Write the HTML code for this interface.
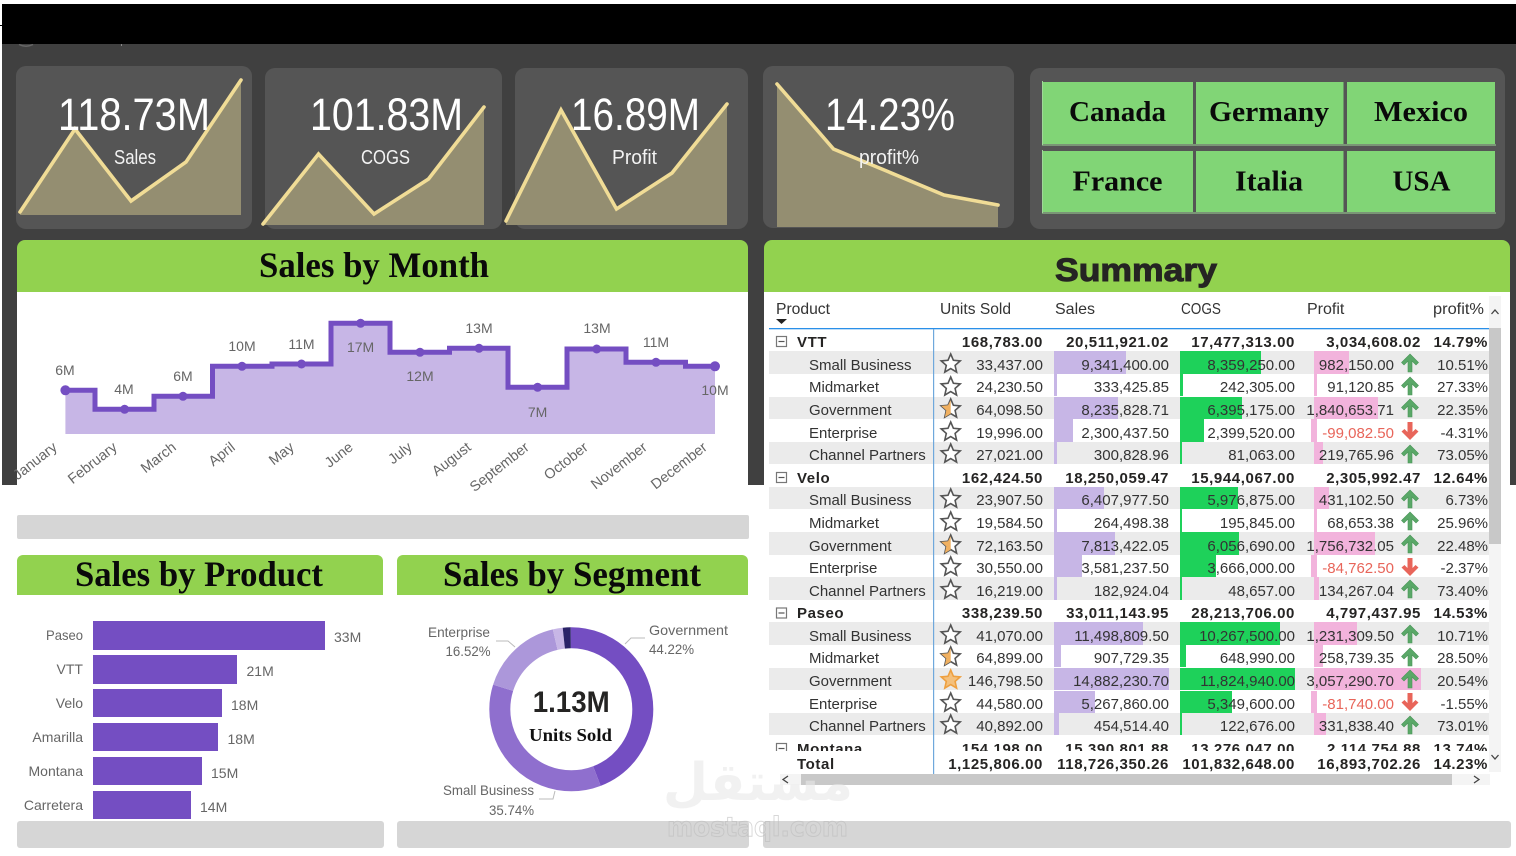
<!DOCTYPE html>
<html lang="en"><head><meta charset="utf-8"><title>Sales Dashboard</title>
<style>
html,body{margin:0;padding:0;background:#fff;width:1516px;height:856px;overflow:hidden}
svg{display:block;font-family:"Liberation Sans",sans-serif}
.kpi{fill:#fff;font-size:45px}
.kl{fill:#f2f2f2;font-size:20px}
.btn{fill:#0a0a0a;font-family:"Liberation Serif",serif;font-weight:bold;font-size:29px}
.ttl{fill:#0a0a0a;font-family:"Liberation Serif",serif;font-weight:bold;font-size:36px}
.lb{fill:#666;font-size:14px}
.mo{fill:#666;font-size:14.4px}
.t{fill:#333;font-size:15px}
.b{fill:#252423;font-size:15px;font-weight:bold;letter-spacing:.6px}
.e{text-anchor:end}
.h{fill:#333;font-size:16px}
.neg{fill:#e8655a}
</style></head><body>
<svg xmlns="http://www.w3.org/2000/svg" width="1516" height="856" viewBox="0 0 1516 856">
<defs>
<path id="st" d="M0 -10L2.7 -3.7L9.5 -3.1L4.4 1.4L5.9 8.1L0 4.6L-5.9 8.1L-4.4 1.4L-9.5 -3.1L-2.7 -3.7Z"/>
<g id="s0"><use href="#st" fill="#fff" stroke="#555" stroke-width="1.6"/></g>
<g id="s1"><use href="#st" fill="#fff" stroke="#555" stroke-width="1.6"/><path d="M0 -9L0 4.6L-5.9 8.1L-4.4 1.4L-9.5 -3.1L-2.7 -3.7Z" fill="#f0b060"/></g>
<g id="s2"><use href="#st" fill="#f4c07c" stroke="#eea040" stroke-width="1.6"/></g>
<path id="up" d="M0 -9L8.5 -.5L6 2L2 -2V9H-2V-2L-6 2L-8.5 -.5Z" fill="#5aa868" stroke="#4a9558" stroke-width=".6"/>
<path id="dn" d="M0 9L8.5 .5L5.5 -2L2.5 1V-9H-2.5V1L-5.5 -2L-8.5 .5Z" fill="#e8655a"/>
<g id="mb"><rect x="-5" y="-5" width="10" height="10" fill="#fff" stroke="#777" stroke-width="1.2"/><path d="M-3 0H3" stroke="#555" stroke-width="1.2"/></g>
</defs>

<!-- page backgrounds -->
<rect width="1516" height="856" fill="#fff"/>
<rect x="2" y="44" width="1514" height="441" fill="#404040"/>
<rect x="2" y="4" width="1514" height="40" fill="#000"/>
<rect x="0" y="25" width="2" height="1" fill="#000"/>
<path d="M19 44.500Q26 48 33 44.500" fill="none" stroke="#666" stroke-width="1.500"/>
<rect x="121" y="44" width="1" height="2" fill="#888"/>

<!-- KPI cards -->
<rect x="16" y="66" width="236" height="163" rx="10" fill="#555"/>
<rect x="265" y="68" width="237" height="161" rx="10" fill="#555"/>
<rect x="515" y="68" width="233" height="161" rx="10" fill="#555"/>
<rect x="763" y="66" width="251" height="162" rx="10" fill="#555"/>
<rect x="1030" y="68" width="475" height="161" rx="10" fill="#555"/>

<path d="M20 212L75 129L131 201L186 162L241 80V215H20Z" fill="#948e71"/>
<path d="M20 212L75 129L131 201L186 162L241 80" fill="none" stroke="#f0dc96" stroke-width="3.600" stroke-linecap="round"/>
<path d="M263 224L318.500 154L374 214L428.500 179L484 107V225H263Z" fill="#948e71"/>
<path d="M263 224L318.500 154L374 214L428.500 179L484 107" fill="none" stroke="#f0dc96" stroke-width="3.600" stroke-linecap="round"/>
<path d="M506 221L561 110L616.500 209L672 173L727 104V225H506Z" fill="#948e71"/>
<path d="M506 221L561 110L616.500 209L672 173L727 104" fill="none" stroke="#f0dc96" stroke-width="3.600" stroke-linecap="round"/>
<path d="M777 84L833.500 149L889 172L944 195L998 205V227H777Z" fill="#948e71"/>
<path d="M777 84L833.500 149L889 172L944 195L998 205" fill="none" stroke="#f0dc96" stroke-width="3.600" stroke-linecap="round"/>

<text class="kpi" x="58" y="130" textLength="152" lengthAdjust="spacingAndGlyphs">118.73M</text>
<text class="kpi" x="310" y="130" textLength="153" lengthAdjust="spacingAndGlyphs">101.83M</text>
<text class="kpi" x="571" y="130" textLength="129" lengthAdjust="spacingAndGlyphs">16.89M</text>
<text class="kpi" x="825" y="130" textLength="130" lengthAdjust="spacingAndGlyphs">14.23%</text>
<text class="kl" x="114" y="164" textLength="42" lengthAdjust="spacingAndGlyphs">Sales</text>
<text class="kl" x="361" y="164" textLength="49" lengthAdjust="spacingAndGlyphs">COGS</text>
<text class="kl" x="612" y="164" textLength="45" lengthAdjust="spacingAndGlyphs">Profit</text>
<text class="kl" x="859" y="164" textLength="60" lengthAdjust="spacingAndGlyphs">profit%</text>

<!-- Country buttons -->
<g fill="#81d576">
<rect x="1043" y="82" width="150" height="62"/><rect x="1196" y="82" width="147.500" height="62"/><rect x="1347" y="82" width="148" height="62"/>
<rect x="1043" y="151" width="150" height="61"/><rect x="1196" y="151" width="147.500" height="61"/><rect x="1347" y="151" width="148" height="61"/>
</g>
<path d="M1042 145H1496M1042 213H1496M1042.500 81V145M1042.500 150V213" stroke="#9fd898" stroke-width="1" fill="none"/>
<text class="btn" x="1069" y="121" textLength="97" lengthAdjust="spacingAndGlyphs">Canada</text>
<text class="btn" x="1209" y="121" textLength="120" lengthAdjust="spacingAndGlyphs">Germany</text>
<text class="btn" x="1374" y="121" textLength="94" lengthAdjust="spacingAndGlyphs">Mexico</text>
<text class="btn" x="1072.500" y="190.500" textLength="90" lengthAdjust="spacingAndGlyphs">France</text>
<text class="btn" x="1235" y="190.500" textLength="68" lengthAdjust="spacingAndGlyphs">Italia</text>
<text class="btn" x="1392.500" y="190.500" textLength="58" lengthAdjust="spacingAndGlyphs">USA</text>

<!-- Sales by Month -->
<rect x="17" y="292" width="731" height="224" fill="#fff"/>
<path d="M17 292V248a8 8 0 0 1 8-8H740a8 8 0 0 1 8 8V292Z" fill="#92d24f"/>
<text class="ttl" x="259" y="277" textLength="230" lengthAdjust="spacingAndGlyphs">Sales by Month</text>
<rect x="17" y="515" width="732" height="24" rx="2" fill="#d6d6d6"/>
<path d="M65.400 390.300H95V409.300H154V396.300H212.500V366.300H272V364H331V323.300H390V352.300H449.500V348.300H508V387.300H567V349H626V362.300H685.500V366.300H715V434H65.400Z" fill="#c7b6e6"/>
<path d="M65.400 390.300H95V409.300H154V396.300H212.500V366.300H272V364H331V323.300H390V352.300H449.500V348.300H508V387.300H567V349H626V362.300H685.500V366.300H715" fill="none" stroke="#744ec2" stroke-width="5"/>
<g fill="#744ec2">
<circle cx="65.400" cy="390.300" r="5"/><circle cx="124.600" cy="409.300" r="4.500"/><circle cx="183" cy="396.300" r="4.500"/><circle cx="242" cy="366.300" r="4.500"/><circle cx="301.500" cy="364" r="4.500"/><circle cx="360.600" cy="323.300" r="4.500"/><circle cx="420" cy="352.300" r="4.500"/><circle cx="479" cy="348.300" r="4.500"/><circle cx="537.600" cy="387.300" r="4.500"/><circle cx="596.700" cy="349" r="4.500"/><circle cx="656" cy="362.300" r="4.500"/><circle cx="715" cy="366.300" r="5"/>
</g>
<g class="lb" text-anchor="middle">
<text x="65" y="375">6M</text><text x="124" y="394">4M</text><text x="183" y="381">6M</text><text x="242" y="351">10M</text><text x="301.500" y="349">11M</text><text x="360.600" y="352">17M</text><text x="420" y="381">12M</text><text x="479" y="333">13M</text><text x="537.600" y="417">7M</text><text x="597" y="333">13M</text><text x="656" y="347">11M</text><text x="715" y="395">10M</text>
</g>
<g class="mo" text-anchor="end">
<text x="58" y="449" transform="rotate(-38 58 449)">January</text>
<text x="118" y="449" transform="rotate(-38 118 449)">February</text>
<text x="177" y="449" transform="rotate(-38 177 449)">March</text>
<text x="236" y="449" transform="rotate(-38 236 449)">April</text>
<text x="295" y="449" transform="rotate(-38 295 449)">May</text>
<text x="354" y="449" transform="rotate(-38 354 449)">June</text>
<text x="413" y="449" transform="rotate(-38 413 449)">July</text>
<text x="472" y="449" transform="rotate(-38 472 449)">August</text>
<text x="530" y="449" transform="rotate(-38 530 449)">September</text>
<text x="589" y="449" transform="rotate(-38 589 449)">October</text>
<text x="648" y="449" transform="rotate(-38 648 449)">November</text>
<text x="708" y="449" transform="rotate(-38 708 449)">December</text>
</g>

<!-- Sales by Product -->
<path d="M17 595V561a6 6 0 0 1 6-6H377a6 6 0 0 1 6 6V595Z" fill="#92d24f"/>
<text class="ttl" x="75" y="586" textLength="248" lengthAdjust="spacingAndGlyphs">Sales by Product</text>
<g fill="#744ec2">
<rect x="93" y="621" width="232" height="29"/><rect x="93" y="655" width="144" height="29"/><rect x="93" y="689" width="129" height="28"/><rect x="93" y="723" width="125" height="28"/><rect x="93" y="757" width="109" height="28"/><rect x="93" y="791" width="98" height="28"/>
</g>
<g class="lb" text-anchor="end">
<text x="83" y="640" textLength="37" lengthAdjust="spacingAndGlyphs">Paseo</text><text x="83" y="674">VTT</text><text x="83" y="708">Velo</text><text x="83" y="742">Amarilla</text><text x="83" y="776">Montana</text><text x="83" y="810">Carretera</text>
</g>
<g class="lb">
<text x="334" y="642">33M</text><text x="246.500" y="676">21M</text><text x="231" y="710">18M</text><text x="227.500" y="744">18M</text><text x="211" y="778">15M</text><text x="200" y="812">14M</text>
</g>
<rect x="17" y="821" width="367" height="27" rx="3" fill="#d6d6d6"/>

<!-- Sales by Segment -->
<path d="M397 595V561a6 6 0 0 1 6-6H742a6 6 0 0 1 6 6V595Z" fill="#92d24f"/>
<text class="ttl" x="443" y="586" textLength="258" lengthAdjust="spacingAndGlyphs">Sales by Segment</text>
<g fill="none" stroke-width="21" transform="rotate(-90 571.300 709.300)">
<circle cx="571.300" cy="709.300" r="71.500" pathLength="360" stroke="#744ec2" stroke-dasharray="159.200 200.800"/>
<circle cx="571.300" cy="709.300" r="71.500" pathLength="360" stroke="#8f6fce" stroke-dasharray="128.700 231.300" stroke-dashoffset="-159.200"/>
<circle cx="571.300" cy="709.300" r="71.500" pathLength="360" stroke="#ac97da" stroke-dasharray="59.500 300.500" stroke-dashoffset="-287.900"/>
<circle cx="571.300" cy="709.300" r="71.500" pathLength="360" stroke="#c7b6e6" stroke-dasharray="7 353" stroke-dashoffset="-347.400"/>
<circle cx="571.300" cy="709.300" r="71.500" pathLength="360" stroke="#2a2368" stroke-dasharray="5.600 354.400" stroke-dashoffset="-354.400"/>
</g>
<text x="532.700" y="712" font-size="30" font-weight="bold" fill="#252423" textLength="77" lengthAdjust="spacingAndGlyphs">1.13M</text>
<text x="529" y="741" font-size="18" font-weight="bold" fill="#111" style="font-family:'Liberation Serif',serif" textLength="83" lengthAdjust="spacingAndGlyphs">Units Sold</text>
<path d="M625 644L631 638H645M515 647L508 641H496M555 791L553 799H539" fill="none" stroke="#bbb" stroke-width="1"/>
<g class="lb">
<text x="649" y="635" textLength="79" lengthAdjust="spacingAndGlyphs">Government</text><text x="649" y="654" textLength="45" lengthAdjust="spacingAndGlyphs">44.22%</text>
</g>
<g class="lb">
<text x="428" y="637" textLength="62" lengthAdjust="spacingAndGlyphs">Enterprise</text><text x="445.500" y="656" textLength="45" lengthAdjust="spacingAndGlyphs">16.52%</text>
<text x="443" y="795" textLength="91" lengthAdjust="spacingAndGlyphs">Small Business</text><text x="489" y="815" textLength="45" lengthAdjust="spacingAndGlyphs">35.74%</text>
</g>
<rect x="397" y="821" width="352" height="27" rx="3" fill="#d6d6d6"/>
<rect x="763" y="821" width="748" height="27" rx="3" fill="#d6d6d6"/>

<!-- Summary card -->
<rect x="764" y="292" width="746" height="193" fill="#fff"/>
<path d="M764 292V248a8 8 0 0 1 8-8H1502a8 8 0 0 1 8 8V292Z" fill="#92d24f"/>
<text x="1055" y="281" font-size="32" font-weight="bold" fill="#252423" stroke="#252423" stroke-width="1" textLength="162" lengthAdjust="spacingAndGlyphs">Summary</text>

<!-- stripes -->
<g fill="#ebebeb">
<rect x="769" y="351" width="720" height="23"/><rect x="769" y="397" width="720" height="22"/><rect x="769" y="442" width="720" height="22"/>
<rect x="769" y="487" width="720" height="22"/><rect x="769" y="532" width="720" height="23"/><rect x="769" y="577" width="720" height="23"/>
<rect x="769" y="622" width="720" height="23"/><rect x="769" y="668" width="720" height="22"/><rect x="769" y="713" width="720" height="22"/>
</g>
<!-- Sales bars -->
<g fill="#c7b6e6">
<rect x="1054" y="351" width="72" height="23"/><rect x="1054" y="374" width="3" height="22"/><rect x="1054" y="397" width="64" height="22"/><rect x="1054" y="419" width="19" height="23"/><rect x="1054" y="442" width="3" height="22"/>
<rect x="1054" y="487" width="50" height="22"/><rect x="1054" y="509" width="3" height="23"/><rect x="1054" y="532" width="61" height="23"/><rect x="1054" y="555" width="28" height="22"/><rect x="1054" y="577" width="3" height="23"/>
<rect x="1054" y="622" width="89" height="23"/><rect x="1054" y="645" width="7" height="22"/><rect x="1054" y="668" width="115" height="22"/><rect x="1054" y="691" width="41" height="22"/><rect x="1054" y="713" width="5" height="22"/>
</g>
<!-- COGS bars -->
<g fill="#1ed15a">
<rect x="1180" y="351" width="81" height="23"/><rect x="1180" y="374" width="3" height="22"/><rect x="1180" y="397" width="62" height="22"/><rect x="1180" y="419" width="24" height="23"/><rect x="1180" y="442" width="2" height="22"/>
<rect x="1180" y="487" width="58" height="22"/><rect x="1180" y="509" width="2" height="23"/><rect x="1180" y="532" width="59" height="23"/><rect x="1180" y="555" width="36" height="22"/><rect x="1180" y="577" width="2" height="23"/>
<rect x="1180" y="622" width="100" height="23"/><rect x="1180" y="645" width="6" height="22"/><rect x="1180" y="668" width="115" height="22"/><rect x="1180" y="691" width="52" height="22"/><rect x="1180" y="713" width="2" height="22"/>
</g>
<!-- Profit bars -->
<g fill="#f2b3dc">
<rect x="1314" y="351" width="35" height="23"/><rect x="1314" y="374" width="3" height="22"/><rect x="1314" y="397" width="64" height="22"/><rect x="1311" y="419" width="6" height="23"/><rect x="1314" y="442" width="9" height="22"/>
<rect x="1314" y="487" width="15" height="22"/><rect x="1314" y="509" width="3" height="23"/><rect x="1314" y="532" width="61" height="23"/><rect x="1311" y="555" width="6" height="22"/><rect x="1314" y="577" width="5" height="23"/>
<rect x="1314" y="622" width="43" height="23"/><rect x="1314" y="645" width="9" height="22"/><rect x="1314" y="668" width="107" height="22"/><rect x="1311" y="691" width="6" height="22"/><rect x="1314" y="713" width="12" height="22"/>
</g>

<!-- Header -->
<g class="h">
<text x="776" y="314" textLength="54" lengthAdjust="spacingAndGlyphs">Product</text><text x="940" y="314" textLength="71" lengthAdjust="spacingAndGlyphs">Units Sold</text><text x="1055" y="314">Sales</text><text x="1181" y="314" textLength="40" lengthAdjust="spacingAndGlyphs">COGS</text><text x="1307" y="314">Profit</text><text x="1433" y="314" textLength="51" lengthAdjust="spacingAndGlyphs">profit%</text>
</g>
<path d="M776 319H787L781.500 324Z" fill="#222"/>
<rect x="769" y="328" width="721" height="1.300" fill="#2a8fe8"/>

<!-- Rows -->
<use href="#mb" x="781.500" y="341.500"/><use href="#mb" x="781.500" y="477.500"/><use href="#mb" x="781.500" y="613"/><use href="#mb" x="781.500" y="748.500"/>
<g class="b">
<text x="797" y="347">VTT</text><text x="797" y="483">Velo</text><text x="797" y="618">Paseo</text><text x="797" y="754">Montana</text>
</g>
<g class="t">
<text x="809" y="370">Small Business</text><text x="809" y="392">Midmarket</text><text x="809" y="415">Government</text><text x="809" y="438">Enterprise</text><text x="809" y="460">Channel Partners</text>
<text x="809" y="505">Small Business</text><text x="809" y="528">Midmarket</text><text x="809" y="551">Government</text><text x="809" y="573">Enterprise</text><text x="809" y="596">Channel Partners</text>
<text x="809" y="641">Small Business</text><text x="809" y="663">Midmarket</text><text x="809" y="686">Government</text><text x="809" y="709">Enterprise</text><text x="809" y="731">Channel Partners</text>
</g>
<g class="b e">
<text x="1043" y="347">168,783.00</text><text x="1169" y="347">20,511,921.02</text><text x="1295" y="347">17,477,313.00</text><text x="1421" y="347">3,034,608.02</text><text x="1488" y="347">14.79%</text>
<text x="1043" y="483">162,424.50</text><text x="1169" y="483">18,250,059.47</text><text x="1295" y="483">15,944,067.00</text><text x="1421" y="483">2,305,992.47</text><text x="1488" y="483">12.64%</text>
<text x="1043" y="618">338,239.50</text><text x="1169" y="618">33,011,143.95</text><text x="1295" y="618">28,213,706.00</text><text x="1421" y="618">4,797,437.95</text><text x="1488" y="618">14.53%</text>
<text x="1043" y="754">154,198.00</text><text x="1169" y="754">15,390,801.88</text><text x="1295" y="754">13,276,047.00</text><text x="1421" y="754">2,114,754.88</text><text x="1488" y="754">13.74%</text>
</g>
<g class="t e">
<text x="1043" y="370">33,437.00</text><text x="1169" y="370">9,341,400.00</text><text x="1295" y="370">8,359,250.00</text><text x="1394" y="370">982,150.00</text><text x="1488" y="370">10.51%</text>
<text x="1043" y="392">24,230.50</text><text x="1169" y="392">333,425.85</text><text x="1295" y="392">242,305.00</text><text x="1394" y="392">91,120.85</text><text x="1488" y="392">27.33%</text>
<text x="1043" y="415">64,098.50</text><text x="1169" y="415">8,235,828.71</text><text x="1295" y="415">6,395,175.00</text><text x="1394" y="415">1,840,653.71</text><text x="1488" y="415">22.35%</text>
<text x="1043" y="438">19,996.00</text><text x="1169" y="438">2,300,437.50</text><text x="1295" y="438">2,399,520.00</text><text class="neg" x="1394" y="438">-99,082.50</text><text x="1488" y="438">-4.31%</text>
<text x="1043" y="460">27,021.00</text><text x="1169" y="460">300,828.96</text><text x="1295" y="460">81,063.00</text><text x="1394" y="460">219,765.96</text><text x="1488" y="460">73.05%</text>

<text x="1043" y="505">23,907.50</text><text x="1169" y="505">6,407,977.50</text><text x="1295" y="505">5,976,875.00</text><text x="1394" y="505">431,102.50</text><text x="1488" y="505">6.73%</text>
<text x="1043" y="528">19,584.50</text><text x="1169" y="528">264,498.38</text><text x="1295" y="528">195,845.00</text><text x="1394" y="528">68,653.38</text><text x="1488" y="528">25.96%</text>
<text x="1043" y="551">72,163.50</text><text x="1169" y="551">7,813,422.05</text><text x="1295" y="551">6,056,690.00</text><text x="1394" y="551">1,756,732.05</text><text x="1488" y="551">22.48%</text>
<text x="1043" y="573">30,550.00</text><text x="1169" y="573">3,581,237.50</text><text x="1295" y="573">3,666,000.00</text><text class="neg" x="1394" y="573">-84,762.50</text><text x="1488" y="573">-2.37%</text>
<text x="1043" y="596">16,219.00</text><text x="1169" y="596">182,924.04</text><text x="1295" y="596">48,657.00</text><text x="1394" y="596">134,267.04</text><text x="1488" y="596">73.40%</text>

<text x="1043" y="641">41,070.00</text><text x="1169" y="641">11,498,809.50</text><text x="1295" y="641">10,267,500.00</text><text x="1394" y="641">1,231,309.50</text><text x="1488" y="641">10.71%</text>
<text x="1043" y="663">64,899.00</text><text x="1169" y="663">907,729.35</text><text x="1295" y="663">648,990.00</text><text x="1394" y="663">258,739.35</text><text x="1488" y="663">28.50%</text>
<text x="1043" y="686">146,798.50</text><text x="1169" y="686">14,882,230.70</text><text x="1295" y="686">11,824,940.00</text><text x="1394" y="686">3,057,290.70</text><text x="1488" y="686">20.54%</text>
<text x="1043" y="709">44,580.00</text><text x="1169" y="709">5,267,860.00</text><text x="1295" y="709">5,349,600.00</text><text class="neg" x="1394" y="709">-81,740.00</text><text x="1488" y="709">-1.55%</text>
<text x="1043" y="731">40,892.00</text><text x="1169" y="731">454,514.40</text><text x="1295" y="731">122,676.00</text><text x="1394" y="731">331,838.40</text><text x="1488" y="731">73.01%</text>
</g>

<!-- stars -->
<use href="#s0" x="950.700" y="364"/><use href="#s0" x="950.700" y="387"/><use href="#s1" x="950.700" y="409"/><use href="#s0" x="950.700" y="432"/><use href="#s0" x="950.700" y="454"/>
<use href="#s0" x="950.700" y="499"/><use href="#s0" x="950.700" y="522"/><use href="#s1" x="950.700" y="545"/><use href="#s0" x="950.700" y="567"/><use href="#s0" x="950.700" y="590"/>
<use href="#s0" x="950.700" y="635"/><use href="#s1" x="950.700" y="657"/><use href="#s2" x="950.700" y="680"/><use href="#s0" x="950.700" y="703"/><use href="#s0" x="950.700" y="725"/>
<!-- arrows -->
<use href="#up" x="1410" y="363"/><use href="#up" x="1410" y="386"/><use href="#up" x="1410" y="408"/><use href="#dn" x="1410" y="431"/><use href="#up" x="1410" y="454"/>
<use href="#up" x="1410" y="499"/><use href="#up" x="1410" y="521"/><use href="#up" x="1410" y="544"/><use href="#dn" x="1410" y="567"/><use href="#up" x="1410" y="589"/>
<use href="#up" x="1410" y="634"/><use href="#up" x="1410" y="657"/><use href="#up" x="1410" y="679"/><use href="#dn" x="1410" y="702"/><use href="#up" x="1410" y="725"/>

<!-- Total row -->
<rect x="769" y="751" width="720" height="23" fill="#fff"/>
<g class="b"><text x="797" y="769">Total</text></g>
<g class="b e">
<text x="1043" y="769">1,125,806.00</text><text x="1169" y="769">118,726,350.26</text><text x="1295" y="769">101,832,648.00</text><text x="1421" y="769">16,893,702.26</text><text x="1488" y="769">14.23%</text>
</g>
<rect x="933" y="329" width="1.200" height="445" fill="#6fa8dc"/>

<!-- scrollbars -->
<rect x="1489" y="296" width="12" height="476" fill="#f4f4f4"/>
<rect x="1489" y="328" width="12" height="216" fill="#c8c8c8"/>
<path d="M1491.500 314L1495 310L1498.500 314M1491.500 755L1495 759L1498.500 755" fill="none" stroke="#444" stroke-width="1.300"/>
<rect x="780" y="774" width="710" height="11" fill="#f4f4f4"/>
<rect x="801" y="774" width="651" height="11" fill="#c8c8c8"/>
<path d="M788 776L783 779.500L788 783M1474 776L1479 779.500L1474 783" fill="none" stroke="#444" stroke-width="1.300"/>

<!-- watermark -->
<g opacity=".6" style="font-family:'DejaVu Sans',sans-serif" font-weight="bold">
<text x="758" y="800" font-size="52" text-anchor="middle" fill="#e8e8e8">مستقل</text>
<text x="667" y="836" font-size="27" fill="none" stroke="#bdbdbd" stroke-width="1" textLength="181" lengthAdjust="spacingAndGlyphs">mostaql.com</text>
</g>
</svg>
</body></html>
